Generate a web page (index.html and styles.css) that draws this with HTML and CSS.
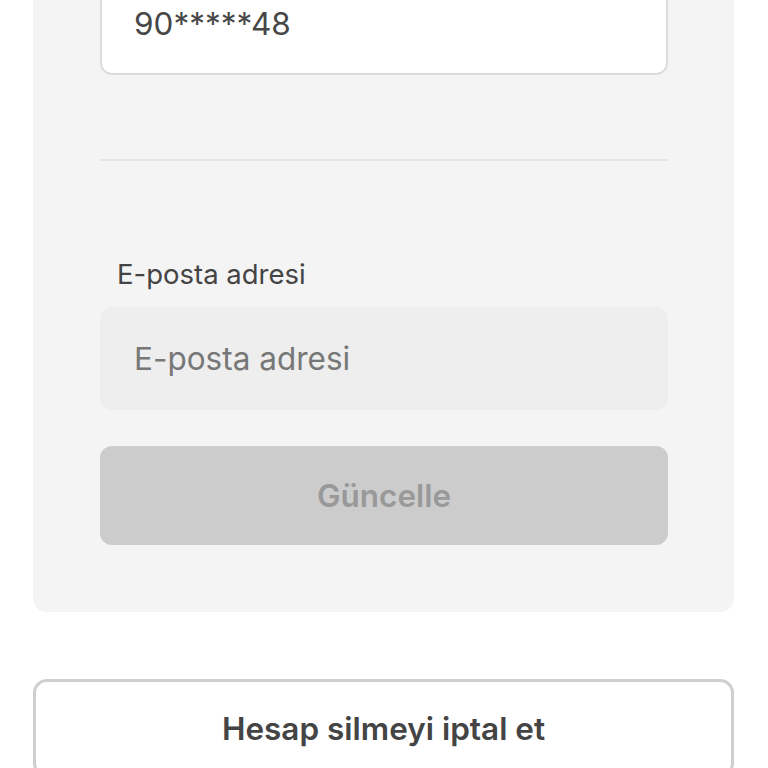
FILE: index.html
```html
<!DOCTYPE html>
<html lang="tr">
<head>
<meta charset="utf-8">
<title>Hesap</title>
<link rel="stylesheet" href="styles.css">
</head>
<body>
<main class="page">
  <section class="card">
    <div class="field-box phone-box"><span class="phone-value">90*****48</span></div>
    <hr class="divider">
    <label class="field-label">E-posta adresi</label>
    <div class="field-box email-box"><span class="placeholder">E-posta adresi</span></div>
    <button class="update-btn" type="button">Güncelle</button>
  </section>
  <button class="cancel-btn" type="button">Hesap silmeyi iptal et</button>
</main>
</body>
</html>
```
FILE: styles.css
```css
html, body {
  margin: 0;
  padding: 0;
  background: #ffffff;
  overflow: hidden;
}
body {
  font-family: Inter, "Noto Sans", "Liberation Sans", sans-serif;
  color: #444444;
}
.page {
  margin-top: -62px;
  padding: 0 34px 0 33px;
  display: flex;
  flex-direction: column;
}
.card {
  background: #f4f4f4;
  border-radius: 14px;
  padding: 34px 66px 67px 67px;
  display: flex;
  flex-direction: column;
}
.field-box {
  box-sizing: border-box;
  height: 103px;
  border-radius: 12px;
  display: flex;
  align-items: center;
  padding: 0 32px;
  font-size: 31.5px;
}
.phone-box {
  background: #ffffff;
  border: 2px solid #dcdcdc;
  color: #474747;
}
.divider {
  border: 0;
  height: 2px;
  background: #e7e7e7;
  margin: 84px 0 0 0;
}
.field-label {
  font-size: 27.5px;
  color: #444444;
  padding-left: 17px;
  margin-top: 96px;
  line-height: 34px;
}
.email-box {
  margin-top: 16px;
  background: #eeeeee;
  padding-left: 34px;
}
.placeholder {
  color: #777777;
}
.update-btn {
  margin-top: 36px;
  height: 99px;
  border: 0;
  border-radius: 12px;
  background: #cccccc;
  color: #999999;
  font-family: inherit;
  font-size: 31.5px;
  font-weight: 600;
}
.cancel-btn {
  margin-top: 67px;
  height: 98px;
  background: #ffffff;
  border: 3px solid #cfcfcf;
  border-radius: 14px;
  color: #444444;
  font-family: inherit;
  font-size: 31.5px;
  font-weight: 600;
}
```
